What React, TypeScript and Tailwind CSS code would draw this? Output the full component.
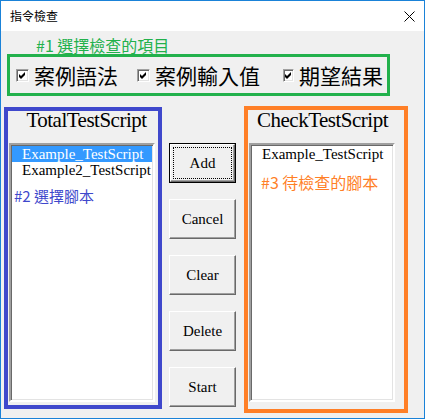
import React from "react";

const serif = "font-['Liberation_Serif','Noto_Sans_CJK_TC',serif]";
const cjk = "font-['Noto_Sans_CJK_TC',sans-serif]";

const CheckBox = () => {
  return (
    <div className="w-[13px] h-[13px] bg-white border border-t-[#a0a0a0] border-l-[#a0a0a0] border-b-white border-r-white shadow-[inset_1px_1px_0_#696969,inset_-1px_-1px_0_#e3e3e3] flex items-center justify-center">
      <svg width="7" height="7" viewBox="0 0 7 7">
        <polygon points="0,2 2,4 6,0 6,3 2,7 0,5" fill="#000" />
      </svg>
    </div>
  );
};

const Option = ({ label, width }: { label: string; width: string }) => {
  return (
    <div className={`${width} flex items-center gap-[5px]`}>
      <CheckBox />
      <span className={`${cjk} text-[21px] leading-[24px] text-black whitespace-nowrap`}>
        {label}
      </span>
    </div>
  );
};

const Button = ({ label, isDefault }: { label: string; isDefault?: boolean }) => {
  const text = `${serif} text-[15px] leading-[18px] text-black`;
  if (isDefault) {
    return (
      <div className="w-[67px] h-[40px] border border-black flex">
        <div className="flex-1 flex p-[2px] bg-[#f0f0f0] border border-t-white border-l-white border-b-[#696969] border-r-[#696969] shadow-[inset_-1px_-1px_0_#a0a0a0]">
          <div className={`flex-1 flex items-center justify-center border border-dotted border-black ${text}`}>
            {label}
          </div>
        </div>
      </div>
    );
  }
  return (
    <div
      className={`w-[67px] h-[40px] flex items-center justify-center bg-[#f0f0f0] border border-t-white border-l-white border-b-[#696969] border-r-[#696969] shadow-[inset_-1px_-1px_0_#a0a0a0] ${text}`}
    >
      {label}
    </div>
  );
};

const ListBox = ({ children }: { children: React.ReactNode }) => {
  return (
    <div className="ml-[1px] w-[146px] h-[259px] bg-white border-2 border-t-[#a0a0a0] border-l-[#a0a0a0] border-b-white border-r-white shadow-[inset_1px_1px_0_#696969,inset_-1px_-1px_0_#e3e3e3] flex flex-col overflow-hidden">
      {children}
    </div>
  );
};

export default function App() {
  const item = `${serif} h-[16px] text-[15px] leading-[16px] whitespace-nowrap`;

  return (
    <div className="w-[425px] h-[419px] border border-[#1a82d8] bg-[#f0f0f0] flex flex-col overflow-hidden">
      {/* title bar */}
      <div className="h-[30px] bg-white flex items-center justify-between pl-[9px] pr-[9px]">
        <span className={`${cjk} text-[12px] leading-[16px] text-black`}>指令檢查</span>
        <svg width="11" height="11" viewBox="0 0 11 11">
          <path d="M0.5 0.5L10.5 10.5M10.5 0.5L0.5 10.5" stroke="#000" strokeWidth="1" />
        </svg>
      </div>

      <div className={`${cjk} h-[23px] pt-[5px] pl-[35px] text-[16px] leading-[18px] text-[#22b14c]`}>
        #1 選擇檢查的項目
      </div>

      <div className="ml-[6px] w-[383px] h-[42px] border-[3px] border-[#22b14c] flex items-center pl-[6px]">
        <Option label="案例語法" width="w-[121px]" />
        <Option label="案例輸入值" width="w-[146px]" />
        <Option label="期望結果" width="w-[100px]" />
      </div>

      <div className="mt-[10px] flex items-start">
        {/* left list */}
        <div className="ml-[3px] mt-[1px] w-[158px] h-[302px] border-4 border-[#3f48cc] flex flex-col">
          <div className={`${serif} h-[32px] pl-[7px] text-center text-[21px] leading-[18px] tracking-[-0.5px] text-black`}>
            TotalTestScript
          </div>
          <ListBox>
            <div className={`${item} mt-[1px] mx-[1px] pl-[10px] bg-[#3399ff] text-white`}>
              Example_TestScript
            </div>
            <div className={`${item} mx-[1px] pl-[10px] text-black`}>Example2_TestScript</div>
            <div className={`${cjk} mt-[8px] pl-[3px] text-[15px] leading-[20px] text-[#3f48cc]`}>
              #2 選擇腳本
            </div>
          </ListBox>
        </div>

        {/* buttons */}
        <div className="ml-[7px] mt-[37px] flex flex-col gap-[16px]">
          <Button label="Add" isDefault />
          <Button label="Cancel" />
          <Button label="Clear" />
          <Button label="Delete" />
          <Button label="Start" />
        </div>

        {/* right list */}
        <div className="ml-[8px] w-[164px] h-[307px] border-4 border-[#ff7f27] flex flex-col">
          <div className={`${serif} h-[33px] pt-[1px] pr-[7px] text-center text-[21px] leading-[18px] tracking-[-0.5px] text-black`}>
            CheckTestScript
          </div>
          <ListBox>
            <div className={`${item} mt-[1px] pl-[11px] text-black`}>Example_TestScript</div>
            <div className={`${cjk} mt-[10px] pl-[10px] text-[16px] leading-[20px] text-[#ff7f27]`}>
              #3 待檢查的腳本
            </div>
          </ListBox>
        </div>
      </div>
    </div>
  );
}
